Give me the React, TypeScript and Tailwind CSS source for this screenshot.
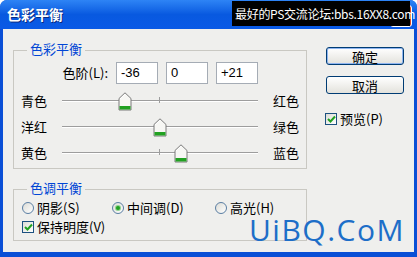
const cjk = "font-['Noto_Sans_CJK_SC','Noto_Sans',sans-serif]"

function Thumb({ value }: { value: number }) {
  const pos = ((value + 100) / 200) * 196
  return (
    <svg
      className="absolute top-[-9px]"
      style={{ left: pos - 7 }}
      width="14"
      height="19"
      viewBox="0 0 14 19"
    >
      <path d="M1 6.5 L7 0.8 L13 6.5 V18 H1 Z" fill="#f7f7f4" stroke="#7a7a7a" strokeWidth="1" />
      <rect x="1.5" y="14" width="11" height="3.5" fill="#21a121" />
      <path d="M2 7 L7 2.3" stroke="#ffffff" strokeWidth="1" />
    </svg>
  )
}

function Slider({ left, right, value }: { left: string; right: string; value: number }) {
  return (
    <div className="flex h-[26px] items-center">
      <span className="w-[48px] pl-[7px]">{left}</span>
      <div className="relative h-[2px] w-[196px] border-t border-[#9d9d9d] bg-white">
        <div className="absolute left-[97px] top-[-4px] h-[6px] w-px bg-[#9d9d9d]" />
        <Thumb value={value} />
      </div>
      <span className="ml-[15px]">{right}</span>
    </div>
  )
}

function Group({ title, className, children }: { title: string; className: string; children: React.ReactNode }) {
  return (
    <div className={`relative border border-[#c9c8c2] ${className}`}>
      <span className="absolute left-[13px] top-[-10px] bg-[#efefed] px-[3px] leading-[16px] text-[#0046d5]">
        {title}
      </span>
      {children}
    </div>
  )
}

function Radio({ checked }: { checked?: boolean }) {
  return (
    <span className="flex h-[12px] w-[12px] items-center justify-center rounded-full border border-[#5a7ea3] bg-gradient-to-br from-[#dcdcd6] to-white">
      {checked && <span className="h-[4px] w-[4px] rounded-full bg-[#21a121] ring-1 ring-[#8fd28f]" />}
    </span>
  )
}

function Check() {
  return (
    <span className="flex h-[12px] w-[12px] items-center justify-center border border-[#1c5180] bg-gradient-to-br from-[#dcdcd6] to-white">
      <svg width="9" height="8" viewBox="0 0 9 8">
        <path d="M1 4 L3.5 6.5 L8 1.5" fill="none" stroke="#21a121" strokeWidth="2" />
      </svg>
    </span>
  )
}

function Input({ value }: { value: string }) {
  return (
    <div className="flex h-[22px] w-[42px] items-center border border-[#a5acb5] bg-white pl-[4px] font-['Liberation_Sans',sans-serif] text-[13px]">
      {value}
    </div>
  )
}

export default function App() {
  return (
    <div className={`relative flex h-[257px] w-[417px] flex-col overflow-hidden rounded-t-[7px] bg-[#0a4fd6] text-[13px] text-black ${cjk}`}>
      {/* title bar */}
      <div className="flex h-[29px] items-center bg-gradient-to-b from-[#2e84f5] via-[#0859e0] to-[#0a5ae6] pl-[7px]">
        <span className="text-[14px] font-bold text-white [text-shadow:1px_1px_0_#0a2a80]">色彩平衡</span>
      </div>
      <div className="absolute right-[5px] top-[5px] h-[22px] w-[22px] rounded-[3px] border border-white bg-[#d8461d]" />
      <div className="absolute left-[232px] top-[1px] flex h-[25px] w-[178px] items-center whitespace-nowrap bg-black pl-[3px] text-[12px] leading-none tracking-[-0.3px] text-white">
        最好的PS交流论坛:bbs.16XX8.com
      </div>

      {/* body */}
      <div className="mx-[3px] mb-[5px] flex flex-1 bg-[#efefed]">
        <div className="ml-[10px] flex w-[294px] flex-col pt-[21px]">
          <Group title="色彩平衡" className="h-[119px] pt-[11px]">
            <div className="flex items-center">
              <span className="w-[94px] text-right">色阶(L):</span>
              <div className="ml-[8px] flex gap-[8px]">
                <Input value="-36" />
                <Input value="0" />
                <Input value="+21" />
              </div>
            </div>
            <div className="mt-[4px]">
              <Slider left="青色" right="红色" value={-36} />
              <Slider left="洋红" right="绿色" value={0} />
              <Slider left="黄色" right="蓝色" value={21} />
            </div>
          </Group>
          <Group title="色调平衡" className="mt-[20px] h-[52px] pl-[8px] pt-[9px]">
            <div className="flex h-[18px] items-center">
              <label className="flex w-[90px] items-center gap-[3px]">
                <Radio />
                <span>阴影(S)</span>
              </label>
              <label className="flex w-[103px] items-center gap-[3px]">
                <Radio checked />
                <span>中间调(D)</span>
              </label>
              <label className="flex items-center gap-[3px]">
                <Radio />
                <span>高光(H)</span>
              </label>
            </div>
            <div className="flex h-[20px] items-center gap-[3px]">
              <Check />
              <span>保持明度(V)</span>
            </div>
          </Group>
        </div>

        <div className="ml-[19px] flex flex-col pt-[18px]">
          <button className="h-[18px] w-[78px] rounded-[3px] border border-[#003c74] bg-gradient-to-b from-white to-[#e3e2dc] leading-none shadow-[inset_0_0_0_1px_#8fb5f0]">
            确定
          </button>
          <button className="mt-[11px] h-[18px] w-[78px] rounded-[3px] border border-[#003c74] bg-gradient-to-b from-white to-[#e3e2dc] leading-none">
            取消
          </button>
          <label className="-ml-px mt-[15px] flex items-center gap-[3px]">
            <Check />
            <span>预览(P)</span>
          </label>
        </div>
      </div>

      <span className="absolute left-[249px] top-[219px] font-['Open_Sans',sans-serif] text-[30px] font-medium leading-[22px] tracking-[1.5px] text-[#1d6ec8]">
        UiBQ.CoM
      </span>
    </div>
  )
}
